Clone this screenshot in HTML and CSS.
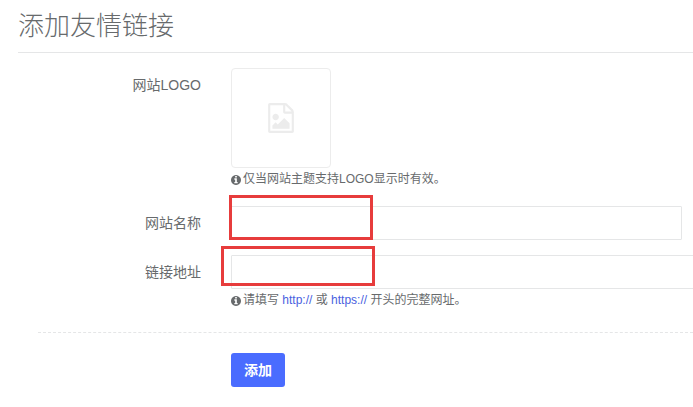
FILE: index.html
```html
<!DOCTYPE html>
<html lang="zh-CN">
  <head>
    <meta charset="utf-8">
    <title>添加友情链接</title>
    <link rel="stylesheet" href="styles.css">
  </head>
  <body>
    <h1 class="page-title">添加友情链接</h1>

    <form class="link-form">
      <div class="form-group">
        <label class="form-label" for="logo">网站LOGO</label>
        <div class="form-field">
          <button type="button" id="logo" class="logo-picker">
            <svg class="logo-icon" viewBox="0 0 1536 1792" aria-hidden="true">
              <path d="M1468 380q28 28 48 76t20 88v1152q0 40-28 68t-68 28H96q-40 0-68-28t-28-68V96q0-40 28-68T96 0h896q40 0 88 20t76 48zM1024 136v376h376q-10-29-22-41l-313-313q-12-12-41-22zM1408 1664V640H992q-40 0-68-28t-28-68V128H128v1536zM1280 1216v320H256v-192l192-192 128 128 384-384zM448 1024q-80 0-136-56t-56-136 56-136 136-56 136 56 56 136-56 136-136 56z"/>
            </svg>
          </button>
          <p class="help-text">
            <svg class="info-icon" viewBox="0 0 1536 1536" aria-hidden="true">
              <path d="M1024 1248v-160q0-14-9-23t-23-9h-96V544q0-14-9-23t-23-9H544q-14 0-23 9t-9 23v160q0 14 9 23t23 9h96v320h-96q-14 0-23 9t-9 23v160q0 14 9 23t23 9h448q14 0 23-9t9-23zM896 352V192q0-14-9-23t-23-9H672q-14 0-23 9t-9 23v160q0 14 9 23t23 9h192q14 0 23-9t9-23zM1536 768q0 209-103 385.500T1153.500 1433 768 1536t-385.500-103T103 1153.500 0 768t103-385.500T382.500 103 768 0t385.500 103T1433 382.500 1536 768z"/>
            </svg>
            <span>仅当网站主题支持LOGO显示时有效。</span>
          </p>
        </div>
      </div>

      <div class="form-group">
        <label class="form-label" for="name">网站名称</label>
        <div class="form-field form-field-short">
          <input type="text" id="name" class="form-control">
          <span class="mark mark-name"></span>
        </div>
      </div>

      <div class="form-group">
        <label class="form-label" for="url">链接地址</label>
        <div class="form-field">
          <input type="text" id="url" class="form-control">
          <span class="mark mark-url"></span>
          <p class="help-text">
            <svg class="info-icon" viewBox="0 0 1536 1536" aria-hidden="true">
              <path d="M1024 1248v-160q0-14-9-23t-23-9h-96V544q0-14-9-23t-23-9H544q-14 0-23 9t-9 23v160q0 14 9 23t23 9h96v320h-96q-14 0-23 9t-9 23v160q0 14 9 23t23 9h448q14 0 23-9t9-23zM896 352V192q0-14-9-23t-23-9H672q-14 0-23 9t-9 23v160q0 14 9 23t23 9h192q14 0 23-9t9-23zM1536 768q0 209-103 385.500T1153.500 1433 768 1536t-385.500-103T103 1153.500 0 768t103-385.500T382.500 103 768 0t385.500 103T1433 382.500 1536 768z"/>
            </svg>
            <span>请填写 <span class="scheme">http://</span> 或 <span class="scheme">https://</span> 开头的完整网址。</span>
          </p>
        </div>
      </div>

      <div class="form-actions">
        <button type="submit" class="btn-primary">添加</button>
      </div>
    </form>
  </body>
</html>
```
FILE: styles.css
```css
:root {
  --primary: #4a6cff;
  --text: #676a6c;
  --border: #e5e6e7;
  --mark: #e73c3c;
  --label-width: 183px;
}

* {
  box-sizing: border-box;
}

body {
  margin: 0;
  padding-left: 18px;
  overflow-x: hidden;
  background: #fff;
  color: var(--text);
  font-family: "Liberation Sans", "Noto Sans CJK SC", sans-serif;
  font-size: 14px;
  line-height: 20px;
}

.page-title {
  margin: 0;
  padding: 6px 0;
  border-bottom: 1px solid var(--border);
  font-size: 26px;
  font-weight: 300;
  line-height: 40px;
}

.link-form {
  padding-top: 15px;
}

.form-group {
  display: grid;
  grid-template-columns: var(--label-width) 1fr;
  column-gap: 30px;
  margin-bottom: 15px;
}

.form-label {
  padding-top: 7px;
  text-align: right;
}

.form-field {
  position: relative;
  margin-right: -10px;
}

.form-field-short {
  margin-right: 11px;
}

.form-control {
  display: block;
  width: 100%;
  height: 34px;
  padding: 6px 12px;
  border: 1px solid var(--border);
  border-radius: 1px;
  background: #fff;
  color: inherit;
  font: inherit;
}

.logo-picker {
  display: flex;
  align-items: center;
  justify-content: center;
  width: 100px;
  height: 100px;
  padding: 0;
  border: 1px solid #ececec;
  border-radius: 4px;
  background: #fff;
  cursor: pointer;
}

.logo-icon {
  width: 26px;
  height: 30px;
  fill: #ececec;
}

.help-text {
  display: flex;
  align-items: center;
  gap: 2px;
  margin: 0;
  font-size: 12px;
  line-height: 23px;
}

.info-icon {
  width: 10px;
  height: 10px;
  fill: currentColor;
}

.scheme {
  color: #4a5fe0;
}

/* red frames around the fields to fill in */
.mark {
  position: absolute;
  border: 3px solid var(--mark);
  pointer-events: none;
}

.mark-name {
  top: -11px;
  left: -2px;
  width: 144px;
  height: 45px;
}

.mark-url {
  top: -9px;
  left: -10px;
  width: 154px;
  height: 40px;
}

.form-actions {
  margin: 20px 0 0 20px;
  padding: 20px 0 20px 193px;
  border-top: 1px dashed var(--border);
}

.btn-primary {
  height: 34px;
  padding: 0 13px;
  border: 0;
  border-radius: 3px;
  background: var(--primary);
  color: #fff;
  font: inherit;
  font-weight: 700;
  cursor: pointer;
}
```
